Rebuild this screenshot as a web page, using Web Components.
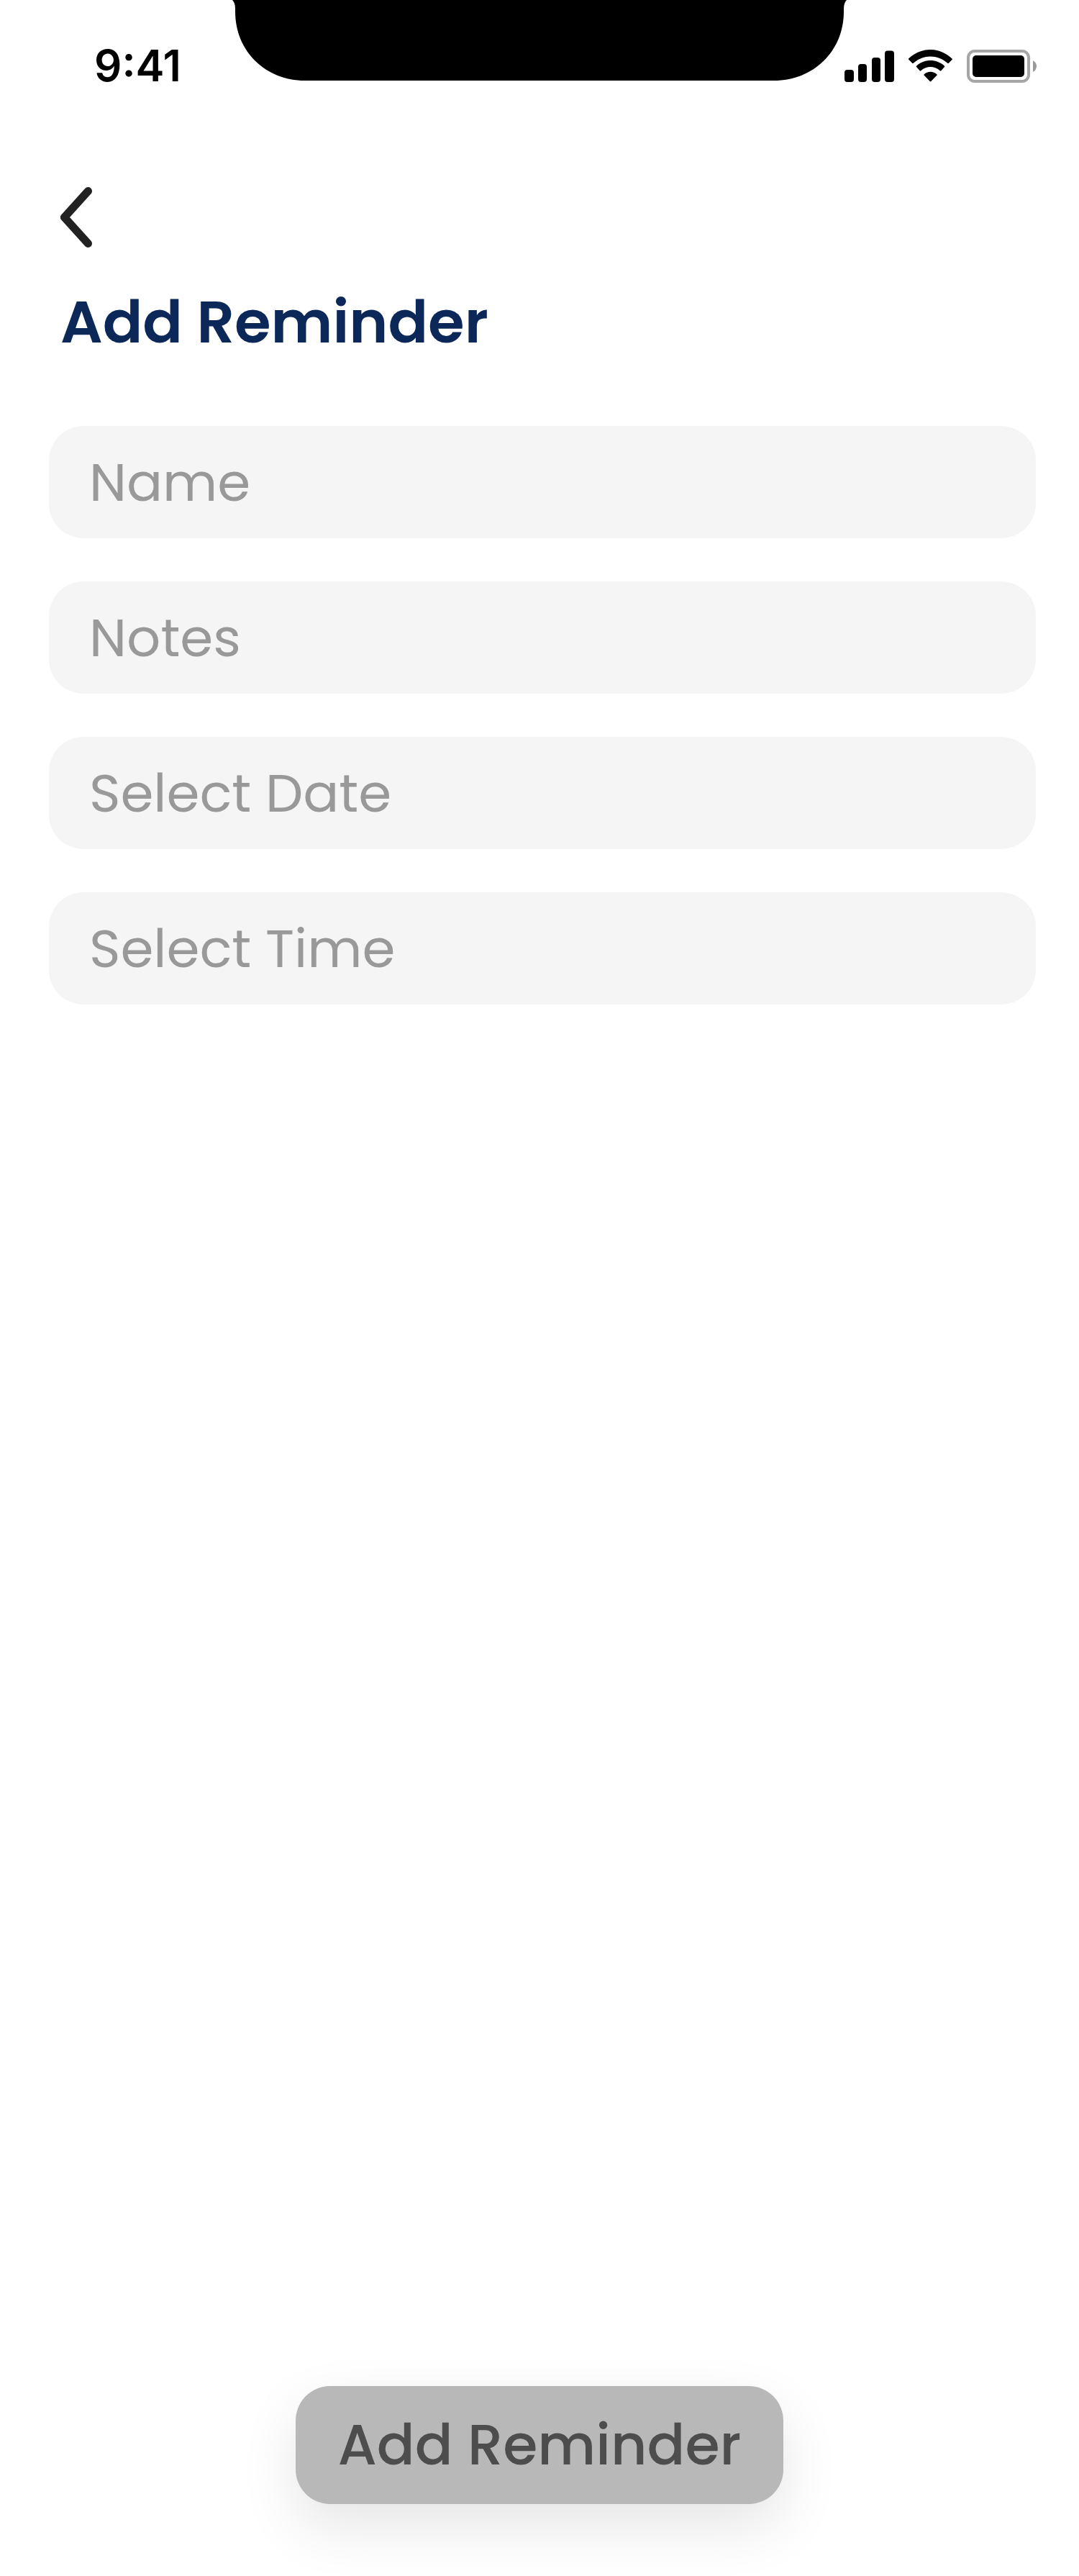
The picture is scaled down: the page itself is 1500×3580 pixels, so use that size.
<!DOCTYPE html>
<html lang="en">
<head>
<meta charset="utf-8">
<meta name="viewport" content="width=device-width, initial-scale=1">
<title>Add Reminder</title>
<style>
  body { margin: 0; background: #fff; font-family: Poppins, Inter, sans-serif; }
</style>
</head>
<body>
<reminder-screen>
  <status-bar slot="status" time="9:41"></status-bar>
  <page-header slot="header">Add Reminder</page-header>
  <text-field label="Name"></text-field>
  <text-field label="Notes"></text-field>
  <text-field label="Select Date"></text-field>
  <text-field label="Select Time"></text-field>
  <action-button slot="action">Add Reminder</action-button>
</reminder-screen>
<script>
class BaseElement extends HTMLElement {
  constructor() {
    super();
    this.attachShadow({ mode: 'open' });
  }
  connectedCallback() {
    this.shadowRoot.innerHTML = this.render();
  }
}

class ReminderScreen extends BaseElement {
  render() {
    return `
      <style>
        :host { display: flex; flex-direction: column; min-height: 100vh; }
        form { flex: 1; display: flex; flex-direction: column; padding: 92px 0 100px; }
        .fields { display: flex; flex-direction: column; gap: 60px; padding: 0 60px 0 68px; }
        footer { margin-top: auto; display: flex; justify-content: center; }
      </style>
      <slot name="status"></slot>
      <slot name="header"></slot>
      <form>
        <div class="fields"><slot></slot></div>
        <footer><slot name="action"></slot></footer>
      </form>`;
  }
}

class StatusBar extends BaseElement {
  render() {
    return `
      <style>
        :host { display: grid; grid-template-columns: 1fr auto 1fr; height: 116px; color: #000; }
        time { padding: 55px 0 0 131px; font: 600 60px/72px Inter, sans-serif; }
        .notch { display: block; overflow: visible; }
        .icons { display: flex; align-items: flex-start; gap: 20px; padding-top: 69px; }
        svg { display: block; flex: none; }
      </style>
      <time>${this.getAttribute('time')}</time>
      <svg class="notch" width="848" height="112" viewBox="0 0 848 112" aria-hidden="true">
        <path d="M-3 0Q1 4 1 12V16C1 72 44 112 98 112H750C804 112 847 72 847 16V12Q847 4 851 0Z"/>
      </svg>
      <div class="icons">
        <svg width="69" height="46" viewBox="0 0 69 46" aria-label="Signal">
          <rect y="28" width="13" height="17" rx="4"/>
          <rect x="19" y="20" width="12" height="25" rx="4"/>
          <rect x="38" y="11" width="12" height="34" rx="4"/>
          <rect x="56" y="1.500" width="13" height="43.500" rx="4"/>
        </svg>
        <svg width="61" height="46" viewBox="0 0 61 46" aria-label="Wi-Fi">
          <path d="M0 12.500Q-.3 13.500 .5 14L5 18.500Q6 19.500 7 18.500C21 6.500 40 6.500 54 18.500Q55 19.500 56 18.500L60.500 14Q61.300 13.200 60.500 12.500C43-4.200 18-4.200 0 12.500Z"/>
          <path d="M11 24Q10.300 23.400 11 22.700C22 12.500 39 12.500 50 22.700Q50.700 23.400 50 24L45.500 29Q44.500 30 43.500 29C36 22.300 25 22.300 17.500 29Q16.500 30 15.500 29Z"/>
          <path d="M21.500 34.500C26.500 29.500 34.500 29.500 39.500 34.500Q40 35 39.500 35.500L31.300 44Q30.500 44.700 29.700 44L21.500 35.500Q21 35 21.500 34.500Z"/>
        </svg>
        <svg width="98" height="46" viewBox="0 0 98 46" aria-label="Battery">
          <rect x="2" y="2" width="84" height="42" rx="9" fill="none" stroke="#a6a6a6" stroke-width="4"/>
          <rect x="8" y="8" width="72" height="30" rx="5"/>
          <path d="M92 15Q97 18 97 23T92 31Z" fill="#999"/>
        </svg>
      </div>`;
  }
}

class PageHeader extends BaseElement {
  render() {
    return `
      <style>
        :host { display: flex; flex-direction: column; align-items: flex-start; gap: 48px; padding: 140px 84px 0; }
        button { display: block; padding: 0; border: 0; background: none; cursor: pointer; }
        svg { display: block; }
        h1 { margin: 0; color: #0b2859; font-size: 82px; line-height: 104px; font-weight: 600; }
      </style>
      <button type="button" aria-label="Back">
        <svg width="44" height="92" viewBox="0 0 44 92">
          <path d="M38.500 9.500L5.500 46L38.500 82.500" fill="none" stroke="#222" stroke-width="11" stroke-linecap="round" stroke-linejoin="round"/>
        </svg>
      </button>
      <h1><slot></slot></h1>`;
  }
}

class TextField extends BaseElement {
  render() {
    const label = this.getAttribute('label');
    return `
      <style>
        :host { display: block; }
        label { display: block; }
        input {
          display: block; box-sizing: border-box; width: 100%; height: 156px; margin: 0;
          padding: 0 56px; border: 0; border-radius: 48px; background: #f5f5f5;
          color: #222; font: 400 74px/92px Poppins, Inter, sans-serif;
        }
        input::placeholder { color: #999; opacity: 1; }
      </style>
      <label><input type="text" placeholder="${label}" aria-label="${label}"></label>`;
  }
}

class ActionButton extends BaseElement {
  render() {
    return `
      <style>
        :host { display: block; }
        button {
          display: block; padding: 32px 58px; border: 0; border-radius: 48px;
          background: #b8b8b8; color: #4d4d4d; font: 500 78px/100px Poppins, Inter, sans-serif;
          box-shadow: 0 32px 80px rgba(0, 0, 0, .1); cursor: pointer;
        }
      </style>
      <button type="button"><slot></slot></button>`;
  }
}

customElements.define('reminder-screen', ReminderScreen);
customElements.define('status-bar', StatusBar);
customElements.define('page-header', PageHeader);
customElements.define('text-field', TextField);
customElements.define('action-button', ActionButton);
</script>
</body>
</html>
